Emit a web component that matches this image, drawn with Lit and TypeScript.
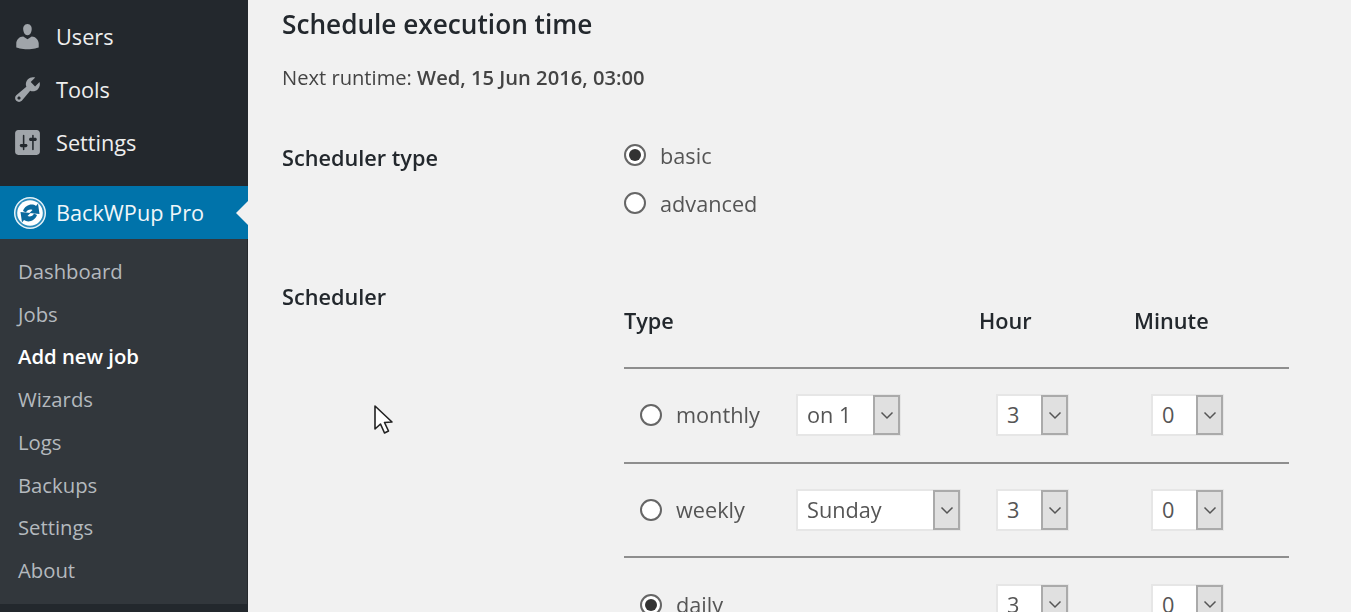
import { LitElement, html, css, svg } from "lit";
import { customElement } from "lit/decorators.js";

const ICONS = {
  users: "M10 9.25c-2.27 0-2.73-3.44-2.73-3.44C7 4.02 7.82 2 9.97 2c2.16 0 2.98 2.02 2.71 3.81 0 0-.41 3.44-2.68 3.44zm0 2.57L12.72 10c2.39 0 4.52 2.33 4.52 4.53v2.49s-3.65 1.13-7.24 1.13c-3.65 0-7.24-1.13-7.24-1.13v-2.49c0-2.25 1.94-4.48 4.47-4.48z",
  tools: "M16.68 9.77c-1.34 1.34-3.3 1.67-4.95.99l-5.41 6.52c-.99.99-2.59.99-3.58 0s-.99-2.59 0-3.57l6.52-5.42c-.68-1.65-.35-3.61.99-4.95 1.28-1.28 3.12-1.62 4.72-1.06l-2.89 2.89 2.82 2.82 2.86-2.87c.53 1.58.18 3.39-1.08 4.65zM3.81 16.21c.4.39 1.04.39 1.43 0 .4-.4.4-1.04 0-1.43-.39-.4-1.03-.4-1.43 0-.39.39-.39 1.03 0 1.43z",
  settings: "M18 16V4c0-1.1-.9-2-2-2H4c-1.1 0-2 .9-2 2v12c0 1.1.9 2 2 2h12c1.1 0 2-.9 2-2zM8 11h1c.55 0 1 .45 1 1s-.45 1-1 1H8v1.5c0 .28-.22.5-.5.5s-.5-.22-.5-.5V13H6c-.55 0-1-.45-1-1s.45-1 1-1h1V5.5c0-.28.22-.5.5-.5s.5.22.5.5V11zm5-2h-1c-.55 0-1-.45-1-1s.45-1 1-1h1V5.5c0-.28.22-.5.5-.5s.5.22.5.5V7h1c.55 0 1 .45 1 1s-.45 1-1 1h-1v5.5c0 .28-.22.5-.5.5s-.5-.22-.5-.5V9z",
};

const arrow = svg`<svg class="chev" viewBox="0 0 14 9"><path d="M1.500 1.500 7 7l5.500-5.500" fill="none" stroke="#555" stroke-width="1.500"/></svg>`;

@customElement("app-root")
export class AppRoot extends LitElement {
  static styles = css`
    :host { display: block; height: 612px; overflow: hidden; font-family: "Open Sans", sans-serif; color: #444; background: #f1f1f1; }
    .page { display: flex; height: 612px; overflow: hidden; filter: blur(0.4px); }
    .side { width: 248px; flex: none; background: #23282d; padding-top: 10px; box-sizing: border-box; height: 612px; overflow: hidden; }
    .top { height: 53px; display: flex; align-items: center; color: #eee; font-size: 21.7px; padding-left: 12px; box-sizing: border-box; }
    .top svg { width: 31px; height: 31px; fill: #a0a5aa; flex: none; margin-right: 13px; }
    .gap { height: 17px; }
    .cur { height: 53px; background: #0073aa; color: #f1f6f9; display: flex; align-items: center; font-size: 21.7px; padding-left: 12px; position: relative; }
    .cur span.t { margin-top: -1px; }
    .cur svg.logo { width: 36px; height: 36px; flex: none; margin-right: 8px; }
    .notch { position: absolute; right: 0; top: 14.500px; width: 0; height: 0; border: 12px solid transparent; border-right-color: #f1f1f1; border-left-width: 0; }
    .sub { background: #32373c; padding: 10.600px 0 12.400px; box-shadow: inset -1px 0 0 #25292d; }
    .sub div { height: 42.750px; display: flex; align-items: center; padding-left: 18px; font-size: 20.300px; color: #b4b9be; }
    .sub div.on { color: #fff; font-weight: 600; }
    .main { flex: 1; padding-left: 34px; min-width: 0; color: #444; }
    h3 { margin: 0; font-size: 26.200px; font-weight: 600; color: #23282d; line-height: 33px; padding-top: 8px; }
    .next { margin: 0; font-size: 20.150px; line-height: 28px; padding-top: 22px; }
    .next b { font-weight: 600; }
    .row { display: grid; grid-template-columns: 342px 1fr; }
    .lab { font-size: 21.700px; font-weight: 600; color: #23282d; line-height: 30px; }
    .r1 { padding-top: 40px; }
    .r1 .lab { padding-top: 12px; }
    .opt { display: flex; align-items: center; height: 48px; font-size: 21.700px; color: #555; }
    .radio { width: 22px; height: 22px; border-radius: 50%; border: 2px solid #666; background: #fff; box-sizing: border-box; margin-right: 14px; flex: none; display: flex; align-items: center; justify-content: center; }
    .radio.on::after { content: ""; width: 12px; height: 12px; border-radius: 50%; background: #333; }
    .r2 { padding-top: 46px; }
    .r2 .lab { padding-top: 9px; }
    .table { width: 665px; }
    .tr { display: grid; grid-template-columns: 355px 155px 1fr; }
    .th { height: 61px; font-size: 21.700px; font-weight: 600; color: #23282d; border-bottom: 2px solid #8e8e8e; padding-top: 33px; line-height: 30px; }
    .td { height: 92.700px; border-bottom: 2px solid #8e8e8e; align-items: center; }
    .cell { display: flex; align-items: center; }
    .cell.t { padding-left: 16px; font-size: 21.700px; color: #555; }
    .cell.t .name { width: 120px; margin-top: -1px; }
    .cell.h { padding-left: 17px; }
    .sel { height: 42px; background: #fff; border: 2px solid #e6e6e6; box-sizing: border-box; display: flex; font-size: 21.700px; color: #555; padding-left: 9px; justify-content: space-between; align-items: center; }
    .sel span { margin-top: -1px; }
    .btn { width: 27px; height: 40px; margin-right: -1px; box-sizing: border-box; background: #e0e0e0; border: 2px solid #aaa; display: flex; align-items: center; justify-content: center; flex: none; }
    .chev { width: 14px; height: 9px; }
    .mouse { position: absolute; left: 373px; top: 404px; width: 21px; height: 32px; }
    .s-on { width: 105px; } .s-sun { width: 165px; } .s-n { width: 73px; }
  `;

  private sel(text: string, cls: string) {
    return html`<div class="sel ${cls}"><span>${text}</span><div class="btn">${arrow}</div></div>`;
  }

  private tr(name: string, on: boolean, type: unknown) {
    return html`<div class="tr td">
      <div class="cell t"><span class="radio ${on ? "on" : ""}"></span><span class="name">${name}</span>${type}</div>
      <div class="cell h">${this.sel("3", "s-n")}</div>
      <div class="cell h">${this.sel("0", "s-n")}</div>
    </div>`;
  }

  render() {
    return html`<div class="page">
      <nav class="side">
        ${(["users", "tools", "settings"] as const).map((k) => html`<div class="top">
          <svg viewBox="0 0 20 20"><path d="${ICONS[k]}"/></svg>${k[0].toUpperCase() + k.slice(1)}</div>`)}
        <div class="gap"></div>
        <div class="cur">
          <svg class="logo" viewBox="0 0 36 36">
            <circle cx="18" cy="18" r="15.300" fill="#2b8bbb" stroke="#e4f1f7" stroke-width="1.500"/>
            <circle cx="18" cy="18" r="12.800" fill="#fff"/>
            <path d="M11 16c2-6 9-8 13-5l2-2.500 1.500 10.500-10-1 3-3c-2.500-1-5.500 0-6.500 2.500z" fill="#0a6a9e"/>
            <path d="M11 16c2-6 9-8 13-5l2-2.500 1.500 10.500-10-1 3-3c-2.500-1-5.500 0-6.500 2.500z" fill="#0a6a9e" transform="rotate(180 18 18)"/>
          </svg>
          <span class="t">BackWPup Pro</span><span class="notch"></span>
        </div>
        <div class="sub">
          <div>Dashboard</div><div>Jobs</div><div class="on">Add new job</div><div>Wizards</div>
          <div>Logs</div><div>Backups</div><div>Settings</div><div>About</div>
        </div>
      </nav>
      <main class="main">
        <h3>Schedule execution time</h3>
        <p class="next">Next runtime: <b>Wed, 15 Jun 2016, 03:00</b></p>
        <div class="row r1">
          <div class="lab">Scheduler type</div>
          <div>
            <div class="opt"><span class="radio on"></span>basic</div>
            <div class="opt"><span class="radio"></span>advanced</div>
          </div>
        </div>
        <div class="row r2">
          <div class="lab">Scheduler</div>
          <div class="table">
            <div class="tr th"><span>Type</span><span>Hour</span><span>Minute</span></div>
            ${this.tr("monthly", false, this.sel("on 1", "s-on"))}
            ${this.tr("weekly", false, this.sel("Sunday", "s-sun"))}
            ${this.tr("daily", true, "")}
          </div>
        </div>
      </main>
      <svg class="mouse" viewBox="0 0 21 32"><path d="M2 2v23l5.500-5 4 9 4-2-4-8.500 7.500-.5z" fill="#fff" stroke="#222" stroke-width="1.600" stroke-linejoin="round"/></svg>
    </div>`;
  }
}
